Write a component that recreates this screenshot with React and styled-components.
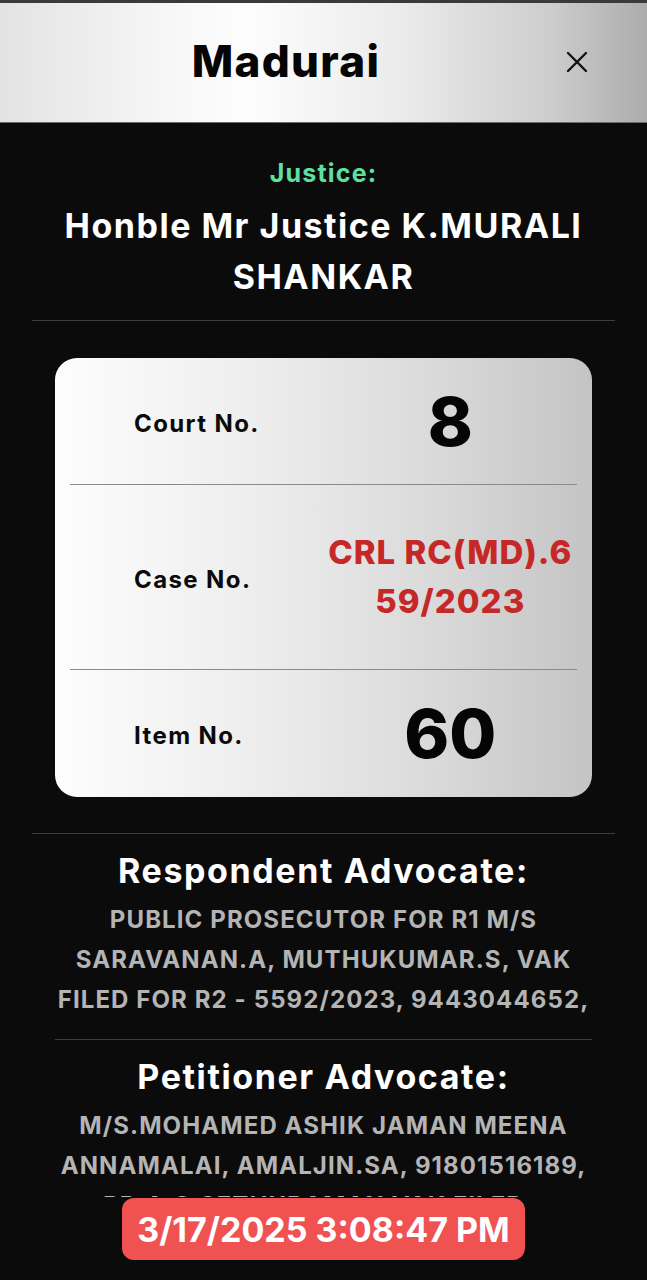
import styled, { createGlobalStyle } from "styled-components";

const GlobalStyle = createGlobalStyle`
  * { box-sizing: border-box; }
  html, body { margin: 0; padding: 0; background: #0b0b0b; }
  body { font-family: "Inter", "Noto Sans", sans-serif; }
`;

const caseRows = [
  { label: "Court No.", value: "8", size: 68, h: 127 },
  { label: "Case No.", value: "CRL RC(MD).659/2023", size: 33, h: 185, red: true },
  { label: "Item No.", value: "60", size: 68, h: 127 },
];

export default function App() {
  return (
    <Page>
      <GlobalStyle />
      <Header>
        <Title>Madurai</Title>
        <CloseButton aria-label="close">
          <svg width="22" height="22" viewBox="0 0 22 22">
            <path d="M2 2 L20 20 M20 2 L2 20" stroke="#111" strokeWidth="2.4" strokeLinecap="round" />
          </svg>
        </CloseButton>
      </Header>

      <Scroll>
        <JusticeBlock>
          <GreenLabel>Justice:</GreenLabel>
          <JudgeName>Honble Mr Justice K.MURALI SHANKAR</JudgeName>
        </JusticeBlock>
        <Divider />

        <Card>
          {caseRows.map((row, i) => (
            <CardRow key={row.label} $h={row.h} $last={i === caseRows.length - 1}>
              <RowLabel>{row.label}</RowLabel>
              <RowValue $size={row.size} $red={row.red}>
                {row.value}
              </RowValue>
            </CardRow>
          ))}
        </Card>

        <Divider />
        <AdvocateBlock>
          <SectionTitle>Respondent Advocate:</SectionTitle>
          <AdvocateText>
            PUBLIC PROSECUTOR FOR R1 M/S SARAVANAN.A, MUTHUKUMAR.S, VAK FILED FOR R2 - 5592/2023, 9443044652,
          </AdvocateText>
        </AdvocateBlock>
        <Divider $inset />
        <AdvocateBlock>
          <SectionTitle>Petitioner Advocate:</SectionTitle>
          <AdvocateText>
            M/S.MOHAMED ASHIK JAMAN MEENA ANNAMALAI, AMALJIN.SA, 91801516189, PR.A.S.SETHURAMAN VAK FILED - 5333/2023
          </AdvocateText>
        </AdvocateBlock>
      </Scroll>

      <Footer>
        <TimeBadge>3/17/2025 3:08:47 PM</TimeBadge>
      </Footer>
    </Page>
  );
}

const Page = styled.div`
  height: 100vh;
  display: flex;
  flex-direction: column;
  background: #0b0b0b;
  overflow: hidden;
`;

const Header = styled.header`
  flex: 0 0 123px;
  display: flex;
  align-items: center;
  border-top: 3px solid #3a3a3a;
  border-bottom: 1px solid #6a6a6a;
  padding-left: 6px;
  padding-right: 59px;
  padding-bottom: 3px;
  background: linear-gradient(90deg, #e3e3e3 0%, #f6f6f6 25%, #fdfdfd 38%, #ebebeb 62%, #cdcdcd 85%, #acacac 100%);
`;

const Title = styled.h1`
  flex: 1;
  margin: 0;
  text-align: center;
  font-size: 44px;
  font-weight: 800;
  color: #050505;
  letter-spacing: 1.3px;
`;

const CloseButton = styled.button`
  width: 22px;
  height: 22px;
  padding: 0;
  border: none;
  background: none;
  display: flex;
  margin-top: 2px;
`;

const Scroll = styled.main`
  flex: 1;
  overflow: hidden;
  padding: 0 32px;
`;

const JusticeBlock = styled.section`
  display: flex;
  flex-direction: column;
  align-items: center;
  gap: 13px;
  padding: 36px 0 18px;
  text-align: center;
`;

const GreenLabel = styled.div`
  font-size: 25px;
  line-height: 28px;
  font-weight: 700;
  letter-spacing: 1.2px;
  color: #5fe0a0;
`;

const JudgeName = styled.div`
  font-size: 34px;
  line-height: 51px;
  font-weight: 700;
  letter-spacing: 1.5px;
  color: #ffffff;
`;

const Divider = styled.hr`
  margin: 0 ${(p) => (p.$inset ? "23px" : "0")};
  border: none;
  height: 1px;
  background: #3c3c3c;
`;

const Card = styled.section`
  margin: 37px 23px 36px;
  padding: 0 15px;
  border-radius: 22px;
  background: linear-gradient(90deg, #fdfdfd 0%, #ececec 40%, #dadada 70%, #c4c4c4 100%);
`;

const CardRow = styled.div`
  height: ${(p) => p.$h}px;
  display: grid;
  grid-template-columns: 1fr 1fr;
  align-items: center;
  border-bottom: ${(p) => (p.$last ? "none" : "1px solid #8a8a8a")};
`;

const RowLabel = styled.div`
  padding-left: 64px;
  padding-top: 4px;
  font-size: 24px;
  font-weight: 700;
  letter-spacing: 1.4px;
  color: #0a0a0a;
`;

const RowValue = styled.div`
  text-align: center;
  font-size: ${(p) => p.$size}px;
  line-height: ${(p) => (p.$red ? "49px" : "1.1")};
  font-weight: 800;
  letter-spacing: ${(p) => (p.$red ? "1px" : "0")};
  color: ${(p) => (p.$red ? "#c62828" : "#050505")};
  word-break: break-all;
`;

const AdvocateBlock = styled.section`
  display: flex;
  flex-direction: column;
  align-items: center;
  gap: 7px;
  padding: 15px 14px 19px;
  text-align: center;
`;

const SectionTitle = styled.h2`
  margin: 0;
  font-size: 34px;
  line-height: 44px;
  font-weight: 700;
  letter-spacing: 1.6px;
  color: #ffffff;
`;

const AdvocateText = styled.p`
  margin: 0;
  font-size: 24px;
  line-height: 40px;
  font-weight: 700;
  letter-spacing: 1.1px;
  color: #b4b4b4;
`;

const Footer = styled.footer`
  flex: 0 0 83px;
  display: flex;
  justify-content: center;
  align-items: flex-start;
  padding-top: 1px;
  background: #0b0b0b;
`;

const TimeBadge = styled.div`
  width: 403px;
  height: 62px;
  display: flex;
  align-items: center;
  justify-content: center;
  border-radius: 12px;
  background: #f05252;
  color: #ffffff;
  font-size: 34px;
  font-weight: 700;
  letter-spacing: 0;
`;
